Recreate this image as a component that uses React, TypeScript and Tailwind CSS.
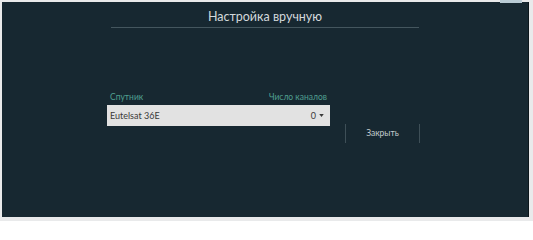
export default function App() {
  return (
    <div className="w-[533px] h-[221px] bg-[#e9eaeb] p-[2px] flex font-['Lato','Open_Sans',sans-serif]">
      <div className="relative flex-1 mr-[2px] mb-[2px] bg-[#172831] border-r border-[#0c161b] flex flex-col">
        {/* small bright tab at top right */}
        <div className="absolute -top-[2px] right-[6px] w-[22px] h-[3px] bg-[#b9cbd4]" />

        {/* Header */}
        <div className="w-[308px] mx-auto pt-[5px]">
          <h1 className="text-center text-[12.5px] leading-[20px] text-[#d3d9dc]">Настройка вручную</h1>
          <div className="h-px bg-[#44565e]" />
        </div>

        {/* Form */}
        <div className="ml-[105px] mt-[63px] flex items-start">
          <div className="w-[223px]">
            <div className="flex justify-between px-[3px] text-[8.5px] leading-[12px] text-[#4f9f8f]">
              <span>Спутник</span>
              <span>Число каналов</span>
            </div>
            <div className="mt-[2px] h-[21px] bg-[#e2e2e2] flex items-center justify-between pl-[3px] pr-[6px] text-[9px] text-[#3a3a3a]">
              <span>Eutelsat 36E</span>
              <span className="flex items-center gap-[3px]">
                0
                <svg width="5" height="3" viewBox="0 0 6 4">
                  <path d="M0 0h6L3 4z" fill="#3a3a3a" />
                </svg>
              </span>
            </div>
          </div>
          <button className="mt-[33px] ml-[15px] w-[75px] h-[19px] border-x border-[#3e4f57] text-[8.5px] text-[#c2cacd]">
            Закрыть
          </button>
        </div>
      </div>
    </div>
  )
}
